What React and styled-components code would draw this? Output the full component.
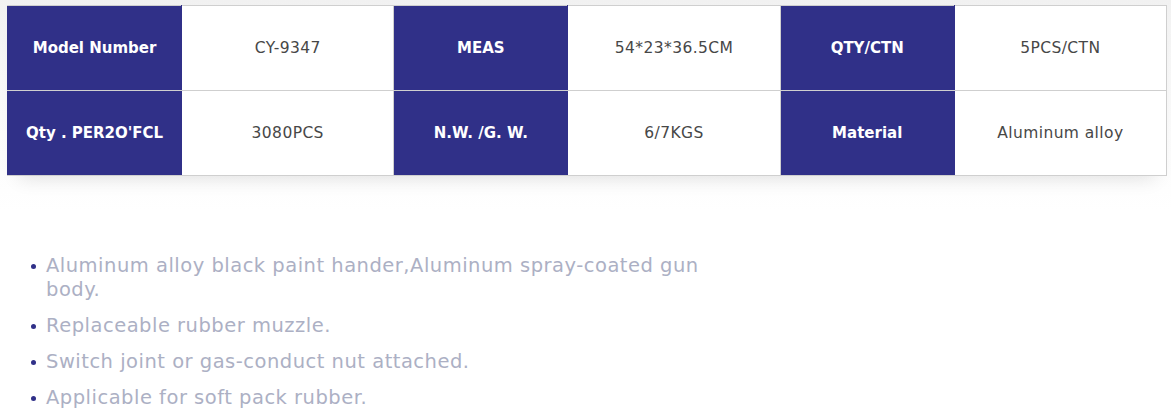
import React from "react";
import styled, { createGlobalStyle } from "styled-components";

const GlobalStyle = createGlobalStyle`
  body {
    margin: 0;
    background: #fff;
    font-family: "DejaVu Sans", "Noto Sans", sans-serif;
  }
`;

const Page = styled.div`
  width: 1171px;
  height: 419px;
  overflow: hidden;
  background: linear-gradient(to bottom, #f1f1f1 0, #f7f7f7 60px, #fff 210px);
`;

const SpecArea = styled.div`
  padding: 5px 5px 0 7px;
  height: 200px;
  box-sizing: border-box;
`;

const SpecTable = styled.table`
  width: 1160px;
  border-collapse: collapse;
  table-layout: fixed;
  background: #fff;
  box-shadow: 0 14px 18px -12px rgba(0, 0, 0, 0.12);
`;

const Col = styled.col`
  width: ${(p) => (p.$head ? "174px" : "212px")};
`;

const Cell = styled.td`
  height: 84px;
  padding: 0 6px;
  border: 1px solid #cfcfcf;
  text-align: center;
  vertical-align: middle;
  font-size: ${(p) => (p.$head ? "15px" : "15.5px")};
  letter-spacing: ${(p) => (p.$head ? "0" : "0.4px")};
  background: ${(p) => (p.$head ? "#303088" : "#fff")};
  color: ${(p) => (p.$head ? "#fff" : "#474747")};
  font-weight: ${(p) => (p.$head ? 700 : 400)};
  border-color: ${(p) => (p.$head ? "#303088" : "#cfcfcf")};
  border-top-color: #cfcfcf;
  border-bottom-color: #cfcfcf;
`;

const Features = styled.ul`
  list-style: none;
  margin: 54px 0 0 0;
  padding: 0 0 0 30px;
  width: 680px;
`;

const Feature = styled.li`
  position: relative;
  padding-left: 16px;
  margin-bottom: 12px;
  font-size: 19.5px;
  letter-spacing: 0.5px;
  line-height: 24px;
  color: #acb0c4;

  &::before {
    content: "";
    position: absolute;
    left: 1px;
    top: 10px;
    width: 5px;
    height: 5px;
    border-radius: 50%;
    background: #303088;
  }
`;

const rows = [
  [
    ["Model Number", "CY-9347"],
    ["MEAS", "54*23*36.5CM"],
    ["QTY/CTN", "5PCS/CTN"],
  ],
  [
    ["Qty . PER2O'FCL", "3080PCS"],
    ["N.W. /G. W.", "6/7KGS"],
    ["Material", "Aluminum alloy"],
  ],
];

const features = [
  "Aluminum alloy black paint hander,Aluminum spray-coated gun body.",
  "Replaceable rubber muzzle.",
  "Switch joint or gas-conduct nut attached.",
  "Applicable for soft pack rubber.",
];

export default function App() {
  return (
    <Page>
      <GlobalStyle />
      <SpecArea>
        <SpecTable>
          <colgroup>
            {[0, 1, 2].map((i) => (
              <React.Fragment key={i}>
                <Col $head />
                <Col />
              </React.Fragment>
            ))}
          </colgroup>
          <tbody>
            {rows.map((row, i) => (
              <tr key={i}>
                {row.map(([label, value]) => (
                  <React.Fragment key={label}>
                    <Cell $head>{label}</Cell>
                    <Cell>{value}</Cell>
                  </React.Fragment>
                ))}
              </tr>
            ))}
          </tbody>
        </SpecTable>
      </SpecArea>
      <Features>
        {features.map((f) => (
          <Feature key={f}>{f}</Feature>
        ))}
      </Features>
    </Page>
  );
}
